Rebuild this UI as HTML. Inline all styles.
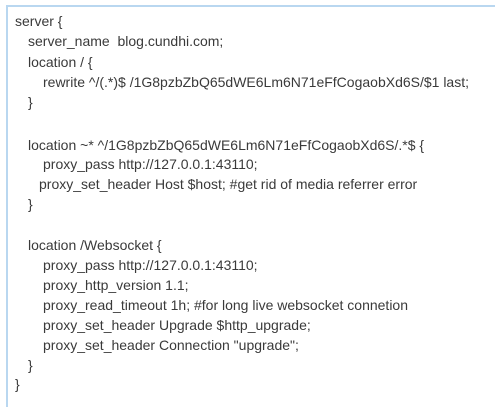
<!DOCTYPE html>
<html><head><style>
html,body{margin:0;padding:0;background:#fff;width:495px;height:407px;overflow:hidden}
.box{position:absolute;left:6px;top:5px;width:489px;height:402px;border-left:2px solid #b9d7f0;border-top:2px solid #b9d7f0;box-sizing:border-box}
.l{position:absolute;font-family:"Liberation Sans",sans-serif;font-size:14px;color:#3a3a3a;white-space:pre;line-height:16px;letter-spacing:0}
</style></head><body>
<div class="box"></div>
<div class="l" style="left:15px;top:13px">server {</div>
<div class="l" style="left:28px;top:33px">server_name  blog.cundhi.com;</div>
<div class="l" style="left:28px;top:54px">location / {</div>
<div class="l" style="left:43px;top:74px">rewrite ^/(.*)$ /1G8pzbZbQ65dWE6Lm6N71eFfCogaobXd6S/$1 last;</div>
<div class="l" style="left:28px;top:94px">}</div>
<div class="l" style="left:28px;top:137px">location ~* ^/1G8pzbZbQ65dWE6Lm6N71eFfCogaobXd6S/.*$ {</div>
<div class="l" style="left:43px;top:156px">proxy_pass http://127.0.0.1:43110;</div>
<div class="l" style="left:39px;top:176px">proxy_set_header Host $host; #get rid of media referrer error</div>
<div class="l" style="left:28px;top:196px">}</div>
<div class="l" style="left:28px;top:237px">location /Websocket {</div>
<div class="l" style="left:43px;top:257px">proxy_pass http://127.0.0.1:43110;</div>
<div class="l" style="left:43px;top:277px">proxy_http_version 1.1;</div>
<div class="l" style="left:43px;top:297px">proxy_read_timeout 1h; #for long live websocket connetion</div>
<div class="l" style="left:43px;top:317px">proxy_set_header Upgrade $http_upgrade;</div>
<div class="l" style="left:43px;top:337px">proxy_set_header Connection "upgrade";</div>
<div class="l" style="left:28px;top:357px">}</div>
<div class="l" style="left:15px;top:376px">}</div>
</body></html>
